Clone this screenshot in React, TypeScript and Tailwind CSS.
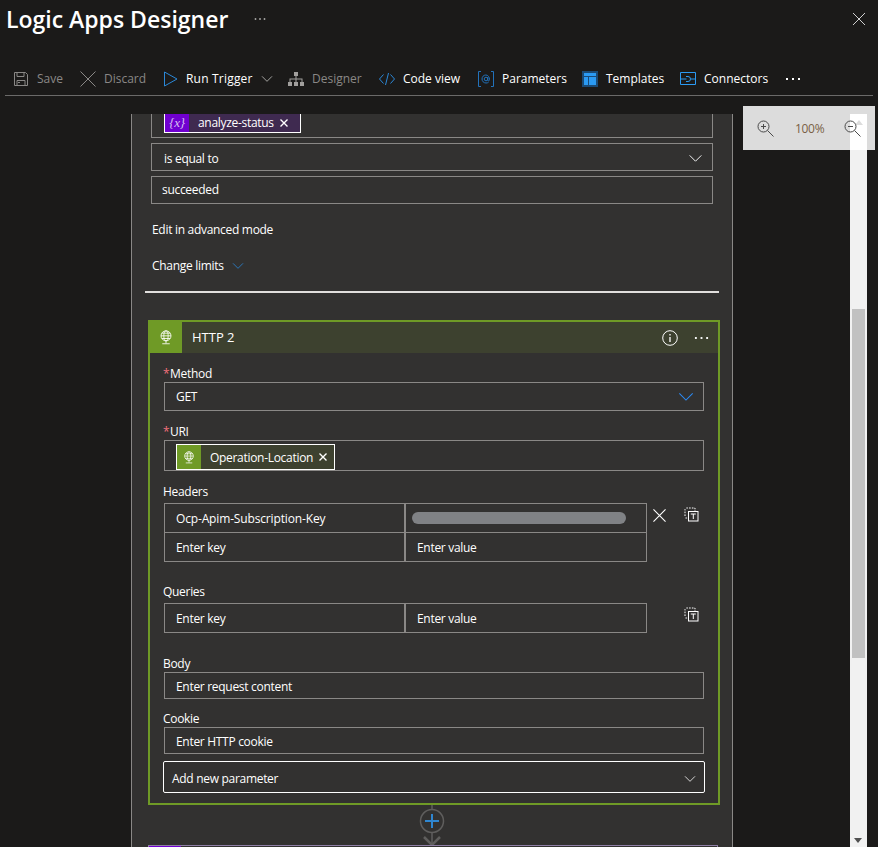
import type { ReactNode } from "react";

const Icon = ({ children, className = "" }: { children: ReactNode; className?: string }) => (
  <svg viewBox="0 0 16 16" fill="none" stroke="currentColor" strokeWidth="1" className={className}>
    {children}
  </svg>
);

const Chevron = ({ className }: { className: string }) => (
  <svg viewBox="0 0 16 9" fill="none" stroke="currentColor" strokeWidth="1.2" className={className}>
    <path d="M0.5 0.5L8 8L15.5 0.5" />
  </svg>
);

const Globe = ({ className }: { className: string }) => (
  <svg viewBox="0 0 16 18" fill="none" stroke="currentColor" strokeWidth="1" className={className}>
    <circle cx="8" cy="7" r="6" />
    <ellipse cx="8" cy="7" rx="2.6" ry="6" />
    <path d="M2 7h12M3 3.8h10M3 10.2h10M8 13v3M3.5 16.5h9" />
  </svg>
);

const ChipClose = () => (
  <svg viewBox="0 0 8 8" fill="none" stroke="white" strokeWidth="1.4" className="h-2 w-2 shrink-0">
    <path d="M0.5 0.5L7.5 7.5M7.5 0.5L0.5 7.5" />
  </svg>
);

const Dots = ({ className }: { className: string }) => (
  <svg viewBox="0 0 16 2" fill="currentColor" className={className}>
    <rect x="1" width="2" height="2" />
    <rect x="7" width="2" height="2" />
    <rect x="13" width="2" height="2" />
  </svg>
);

const PasteT = () => (
  <svg viewBox="0 0 15 15" fill="none" stroke="currentColor" className="h-[15px] w-[15px] text-white">
    <path d="M1 9V2.5L2.5 1H11v3" strokeDasharray="1.6 1.2" />
    <path d="M1.5 11H4" strokeDasharray="1.4 1" />
    <rect x="4.5" y="4.5" width="9.5" height="9.5" />
    <path d="M6.8 7h5M9.3 7v5" />
  </svg>
);

const tools = [
  {
    label: "Save",
    dim: true,
    w: "w-[67px]",
    icon: (
      <Icon className="h-4 w-4 text-[#8a8886]">
        <path d="M1.5 1.5h11l2 2v11h-13zM4 1.5v4h7v-4M4 14.5v-5h8v5M7 11.5H5" />
      </Icon>
    ),
  },
  {
    label: "Discard",
    dim: true,
    w: "w-[83px]",
    icon: (
      <Icon className="h-4 w-4 text-[#8a8886]">
        <path d="M0.5 0.5L15.5 15.5M15.5 0.5L0.5 15.5" />
      </Icon>
    ),
  },
  {
    label: "Run Trigger",
    w: "w-[125px]",
    text: "-ml-px tracking-[0.2px]",
    icon: (
      <Icon className="h-4 w-4 text-[#2b88d8]">
        <path d="M1.5 1L14 8L1.5 15Z" />
      </Icon>
    ),
    chevron: true,
  },
  {
    label: "Designer",
    dim: true,
    w: "w-[91px]",
    icon: (
      <svg viewBox="0 0 16 16" className="h-4 w-4 text-[#a19f9d]" fill="currentColor">
        <path d="M6 1h4v4H6zM0 11h4v4H0zM6 11h4v4H6zM12 11h4v4h-4z" />
        <path d="M7.5 5h1v2.5H14.5V11h-1V8.5h-5V11h-1V8.5h-5V11h-1V7.5h6z" />
      </svg>
    ),
  },
  {
    label: "Code view",
    w: "w-[99px]",
    icon: (
      <Icon className="h-4 w-4 text-[#2b88d8]">
        <path d="M4.5 3.5L0.5 8L4.5 12.5M11.5 3.5L15.5 8L11.5 12.5M9.5 2L6.5 14" />
      </Icon>
    ),
  },
  {
    label: "Parameters",
    w: "w-[104px]",
    icon: (
      <svg viewBox="0 0 16 16" fill="none" stroke="#2272bb" className="h-4 w-4">
        <path d="M3 .5H.5v15H3M13 .5h2.5v15H13" />
        <circle cx="8" cy="8" r="1.8" />
        <path d="M9.8 6v3.2c0 1 1.7 1 1.7-.7 0-2.4-1.500-4.500-3.700-4.500C5.600 4 4 5.800 4 8s1.700 4 4 4c1 0 1.800-.2 2.500-.7" />
      </svg>
    ),
  },
  {
    label: "Templates",
    w: "w-[98px]",
    icon: (
      <svg viewBox="0 0 16 16" className="h-4 w-4">
        <rect width="16" height="16" fill="#1b4a75" />
        <path d="M2 2h12v3H2zM2 6h4v8H2zM7 6h7v8H7z" fill="#2b9af3" />
      </svg>
    ),
  },
  {
    label: "Connectors",
    w: "w-[105px]",
    icon: (
      <Icon className="h-4 w-4 text-[#2b9af3]">
        <path d="M.5 1.500h15v12H.5zM.5 8h6M15.500 8h-4.500M6 5.500h2a2.500 2.500 0 0 1 0 5H6" />
      </Icon>
    ),
  },
];

const Field = ({ children, className = "" }: { children: ReactNode; className?: string }) => (
  <div className={`flex items-center border border-[#8a8886] text-white ${className}`}>{children}</div>
);

const Label = ({ text, required, className = "mt-[11px]" }: { text: string; required?: boolean; className?: string }) => (
  <div className={`-ml-px flex h-[18px] items-center pt-[2px] text-white ${className}`}>
    {required && <span className="w-[7px] text-[#f1707b]">*</span>}
    {text}
  </div>
);

const KeyCell = ({ children, className = "" }: { children: ReactNode; className?: string }) => (
  <div className={`flex items-center border border-[#8a8886] pl-[11px] pt-[2px] text-white ${className}`}>{children}</div>
);

export default function App() {
  return (
    <div className="flex h-[847px] flex-col overflow-hidden bg-[#1b1a19] font-['Open_Sans','Noto_Sans',sans-serif] text-white">
      {/* header */}
      <div className="flex h-[38px] shrink-0 items-center pl-[6px] pr-[13px]">
        <span className="w-[248px] text-[23px] font-semibold whitespace-nowrap">Logic Apps Designer</span>
        <Dots className="h-[2px] w-[12px] text-[#c8c6c4]" />
        <svg viewBox="0 0 12 12" fill="none" stroke="#d0d0d0" className="ml-auto h-3 w-3">
          <path d="M0 0L12 12M12 0L0 12" />
        </svg>
      </div>

      {/* toolbar */}
      <div className="mx-[5px] mt-[20px] flex h-[38px] shrink-0 items-center border-b border-[#6b6a69] pl-2 pt-[4px]">
        {tools.map((t) => (
          <div key={t.label} className={`flex shrink-0 items-center gap-2 ${t.w}`}>
            {t.icon}
            <span className={`text-[12px] whitespace-nowrap ${t.dim ? "text-[#8a8886]" : "text-white"} ${t.text ?? ""}`}>
              {t.label}
            </span>
            {t.chevron && <Chevron className="h-[6px] w-[12px] text-[#c8c6c4]" />}
          </div>
        ))}
        <Dots className="h-[2px] w-4 text-white" />
      </div>

      {/* canvas */}
      <div className="relative mt-[18px] min-h-0 flex-1 text-[12px] tracking-[-0.3px]">
        <div className="ml-[131px] h-full w-[602px] overflow-hidden border-x border-[#8a8886] bg-[#323130]">
          <div className="ml-[19px] w-[562px]">
            <div className="h-[24px] border-x border-b border-[#8a8886] pl-3">
              <div className="flex h-[19px] w-[137px] items-center border-x border-b border-white bg-[#3f2a50]">
                <span className="flex h-full w-[24px] items-center justify-center bg-[#7000d0] font-['Liberation_Serif',serif] text-[13px] italic text-[#d9c2f2]">
                  {"{x}"}
                </span>
                <span className="ml-[9px] whitespace-nowrap">analyze-status</span>
                <span className="ml-[6px]">
                  <ChipClose />
                </span>
              </div>
            </div>
            <Field className="mt-[5px] h-[28px] justify-between pl-3 pr-[10px] pt-[3px]">
              is equal to
              <Chevron className="h-[7px] w-[13px] text-white" />
            </Field>
            <Field className="mt-[5px] h-[28px] pl-[10px]">succeeded</Field>
            <div className="mt-[15px] flex h-5 items-center pl-[1px] pt-[2px]">Edit in advanced mode</div>
            <div className="mt-4 flex h-5 items-center gap-[8px] pl-[1px] pt-[2px]">
              Change limits
              <Chevron className="h-[6px] w-[12px] text-[#2b88d8]" />
            </div>
          </div>

          <div className="ml-[13px] mt-4 h-[2px] w-[574px] bg-[#e1dfdd]" />

          {/* HTTP 2 card */}
          <div className="ml-4 mt-[27px] w-[572px] border-2 border-[#6f9a26] pb-[10px]">
            <div className="flex h-[31px] items-center bg-[#3d412f] pr-[9px]">
              <div className="flex h-full w-[32px] items-center justify-center bg-[#6f9a26]">
                <Globe className="h-[15px] w-[14px] text-white" />
              </div>
              <span className="ml-[10px] text-[13px] tracking-normal">HTTP 2</span>
              <svg viewBox="0 0 16 16" fill="none" stroke="white" className="ml-auto h-4 w-4">
                <circle cx="8" cy="8" r="7.300" />
                <path d="M8 7v5M8 4v1.500" strokeWidth="1.300" />
              </svg>
              <Dots className="ml-[16px] h-[2px] w-[15px] text-white" />
            </div>

            <div className="mx-[14px]">
              <Label text="Method" required />
              <Field className="h-[29px] justify-between pl-[11px] pr-[9px]">
                GET
                <Chevron className="h-2 w-4 text-[#2b88f0]" />
              </Field>

              <Label text="URI" required />
              <Field className="h-[31px] items-end pl-[11px]">
                <div className="flex h-[26px] w-[159px] items-center border border-white bg-[#3d412f]">
                  <span className="flex h-full w-[24px] items-center justify-center bg-[#6f9a26]">
                    <Globe className="h-[13px] w-[12px] text-white" />
                  </span>
                  <span className="ml-[9px] whitespace-nowrap pt-[2px]">Operation-Location</span>
                  <span className="ml-[6px]">
                    <ChipClose />
                  </span>
                </div>
              </Field>

              <Label text="Headers" />
              <div className="mt-[3px] flex items-start">
                <div className="grid w-[483px] grid-cols-[241px_242px]">
                  <KeyCell className="h-[30px] tracking-[-0.15px]">Ocp-Apim-Subscription-Key</KeyCell>
                  <KeyCell className="h-[30px] !pl-[6px] !pt-0">
                    <div className="h-3 w-[214px] rounded-full bg-[#808285]" />
                  </KeyCell>
                  <KeyCell className="-mt-px h-[30px]">Enter key</KeyCell>
                  <KeyCell className="-mt-px h-[30px]">Enter value</KeyCell>
                </div>
                <div className="ml-[6px] mt-[5px] flex items-center">
                  <svg viewBox="0 0 14 14" fill="none" stroke="white" strokeWidth="1.2" className="h-[13px] w-[13px]">
                    <path d="M0.500 0.500L13.500 13.500M13.500 0.500L0.500 13.500" />
                  </svg>
                  <span className="ml-[18px] -mt-px">
                    <PasteT />
                  </span>
                </div>
              </div>

              <Label text="Queries" className="mt-[20px]" />
              <div className="mt-[3px] flex items-start">
                <div className="grid w-[483px] grid-cols-[241px_242px]">
                  <KeyCell className="h-[30px]">Enter key</KeyCell>
                  <KeyCell className="h-[30px]">Enter value</KeyCell>
                </div>
                <span className="ml-[37px] mt-[4px]">
                  <PasteT />
                </span>
              </div>

              <Label text="Body" className="mt-[21px]" />
              <Field className="h-[27px] pl-[11px] pt-[3px]">Enter request content</Field>
              <Label text="Cookie" className="mt-[10px]" />
              <Field className="h-[27px] pl-[11px] pt-[3px]">Enter HTTP cookie</Field>
              <div className="-mx-px mt-[7px] flex h-[32px] items-center justify-between rounded-[2px] border border-white pl-2 pr-[8px] pt-[3px]">
                Add new parameter
                <Chevron className="h-[6px] w-[12px] text-white" />
              </div>
            </div>
          </div>

          {/* connector to the next step */}
          <div className="flex h-[40px] justify-center pr-[1px] text-[#5f5e5d]">
            <svg viewBox="0 0 26 40" fill="none" stroke="currentColor" className="h-[40px] w-[26px]">
              <path d="M13 0v4M13 28v12" strokeWidth="1.500" />
              <circle cx="13" cy="16" r="11.500" strokeWidth="1.500" />
              <path d="M13 9v14M6 16h14" stroke="#2f86d0" strokeWidth="2" />
              <path d="M5 32l8 8l8-8" strokeWidth="2.500" />
            </svg>
          </div>
          <div className="ml-4 flex h-[10px] w-[570px] border border-[#8f7fa5]">
            <div className="h-full w-[32px] bg-[#7000d0]" />
          </div>
        </div>

        {/* zoom control */}
        <div className="absolute left-[743px] top-[-8px] flex h-[44px] w-[132px] items-center bg-[#dcdcdc] pl-[14px]">
          <svg viewBox="0 0 17 17" fill="none" stroke="#4a4a4a" className="relative z-10 h-[17px] w-[17px]">
            <circle cx="6.500" cy="6.500" r="5.500" />
            <path d="M4 6.500h5M6.500 4v5M10.500 10.500L16.500 16.500" />
          </svg>
          <span className="relative z-10 ml-[21px] w-[30px] pt-[2px] text-[#7a5f45]">100%</span>
          <svg viewBox="0 0 17 17" fill="none" stroke="#4a4a4a" className="relative z-10 ml-[19px] h-[17px] w-[17px]">
            <circle cx="6.500" cy="6.500" r="5.500" />
            <path d="M4 6.500h5M10.500 10.500L16.500 16.500" />
          </svg>
        </div>

        {/* scrollbar */}
        <div className="absolute bottom-0 left-[850px] top-0 z-[1] flex w-[17px] flex-col bg-[#f1f1f1]">
          <div className="flex h-[36px] justify-center bg-white pt-[6px]">
            <div className="h-0 w-0 border-x-[4px] border-b-[5px] border-x-transparent border-b-[#dcdcdc]" />
          </div>
          <div className="mx-[2px] mt-[159px] h-[349px] bg-[#c1c1c1]" />
          <div className="absolute bottom-[4px] left-[4px] h-0 w-0 border-x-[4px] border-t-[5px] border-x-transparent border-t-[#505050]" />
        </div>
      </div>
    </div>
  );
}
